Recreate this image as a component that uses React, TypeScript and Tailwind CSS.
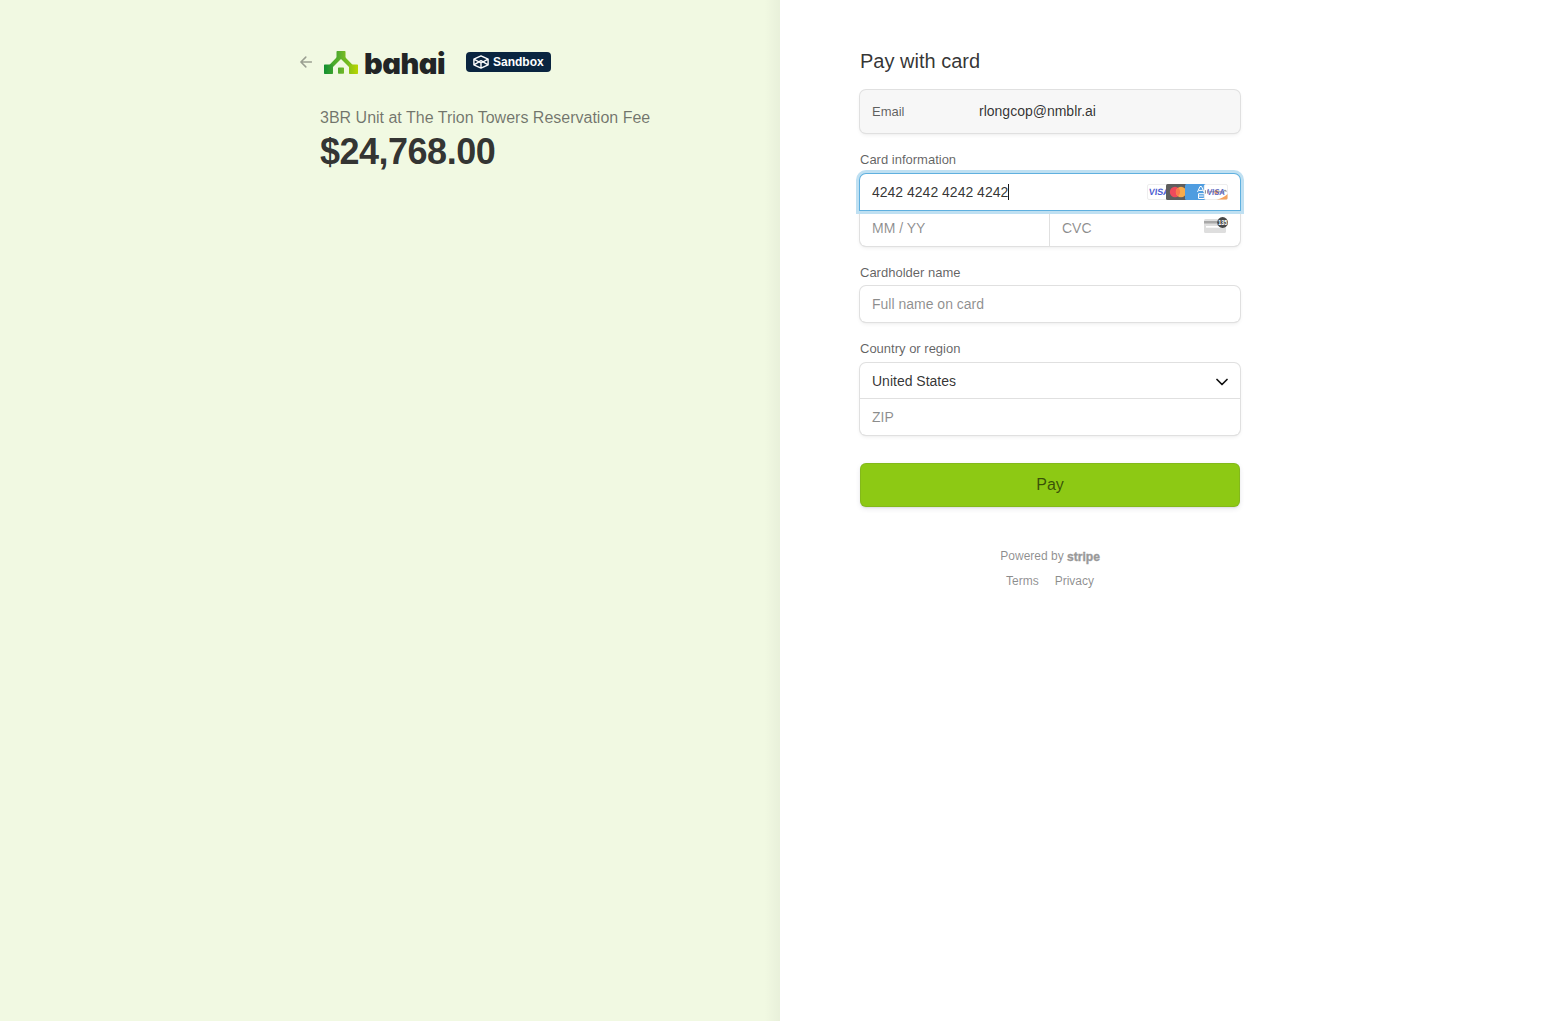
import React from "react";

const fieldShadow =
  "shadow-[0_0_0_1px_#e0e0e0,0_2px_4px_0_rgba(0,0,0,0.07),0_1px_1.5px_0_rgba(0,0,0,0.05)]";

function BackArrow() {
  return (
    <svg width="12" height="12" viewBox="0 0 12 12" fill="none" className="mr-3 shrink-0">
      <path d="M11.500 6H1M5.800 1.100L.9 6l4.900 4.900" stroke="#1a1a1a" strokeOpacity=".4" strokeWidth="1.500" strokeLinecap="round" strokeLinejoin="round" />
    </svg>
  );
}

function HouseMark() {
  return (
    <svg width="34" height="23" viewBox="0 0 34 23" className="shrink-0">
      <defs>
        <linearGradient id="leaf" gradientUnits="userSpaceOnUse" x1="0" y1="0" x2="34" y2="0">
          <stop offset="0" stopColor="#129030" />
          <stop offset=".5" stopColor="#62b22c" />
          <stop offset="1" stopColor="#b9d600" />
        </linearGradient>
        <linearGradient id="shade" gradientUnits="userSpaceOnUse" x1="0" y1="0" x2="34" y2="0">
          <stop offset="0" stopColor="#2f9f33" />
          <stop offset="1" stopColor="#93c81a" />
        </linearGradient>
      </defs>
      <path d="M13 6L5.500 13.800l3.500 2.200 8-8 8 8 3.500-2.200-7.500-7.800z" fill="url(#shade)" />
      <path
        d="M13.200 0h7.600q.7 0 .7.7v7.100h-9V.7q0-.7.7-.7zM.7 13.500H9V22.300q0 .7-.7.7H.7q-.7 0-.7-.7v-8.100q0-.7.7-.7zM25 13.500h8.300q.7 0 .7.7v8.100q0 .7-.7.7h-7.600q-.7 0-.7-.7zM14.700 16.500h4.600q.7 0 .7.700v4.800q0 .7-.7.7h-4.600q-.7 0-.7-.7v-4.800q0-.7.7-.7z"
        fill="url(#leaf)"
      />
    </svg>
  );
}

function SandboxBadge() {
  return (
    <div className="ml-[22px] flex h-5 w-[85px] items-center rounded-[4px] bg-[#0a2540] pl-[7px]">
      <svg width="16" height="14" viewBox="0 0 16 14" fill="none" stroke="#fff" strokeWidth="1.400" strokeLinejoin="round">
        <path d="M8 .9l7.100 3.300v5.600L8 13.100.9 9.800V4.200zM.9 4.200L8 8l7.100-3.800M8 8v5M.9 9.800L8 5.600l7.100 4.200" />
      </svg>
      <span className="ml-[4px] text-[12px] font-bold leading-5 text-white">Sandbox</span>
    </div>
  );
}

function CardBrands() {
  return (
    <svg width="81" height="16" viewBox="0 0 81 16" className="shrink-0" fontFamily="'Liberation Sans', sans-serif">
      <rect x=".5" y=".5" width="23" height="15" rx="1.500" fill="#fff" stroke="#eeeeee" />
      <text x="3" y="11.300" transform="skewX(-7)" fontSize="9.200" fontWeight="700" fill="#4a5bd0" textLength="20.500" lengthAdjust="spacingAndGlyphs">VISA</text>
      <rect x="19" width="24" height="16" rx="1.500" fill="#5e5e5e" />
      <circle cx="28" cy="8" r="5.200" fill="#ee4a5c" />
      <circle cx="34" cy="8" r="5.200" fill="#f8ab4a" />
      <path d="M31 3.800a5.200 5.200 0 0 1 0 8.400 5.200 5.200 0 0 1 0-8.400z" fill="#fa7a4c" />
      <rect x="38" width="24" height="16" rx="1.500" fill="#4f9de0" />
      <path d="M50.500 8l2.500-5.500h1.500L57 8M51.800 6.400h4M57.500 8V2.800h3M57 9.700h-5.500v4.800H57M51.500 12h5" fill="none" stroke="#fff" strokeWidth="1" />
      <rect x="57.300" y=".5" width="23.200" height="15" rx="1.500" fill="#fff" stroke="#eeeeee" />
      <path d="M80.500 10v4a1.500 1.500 0 0 1-1.500 1.500h-9.500c4.500-.8 8-2.600 11-5.500z" fill="#f5a35f" />
      <path d="M58.500 6.200v3.400M60.500 6.200v3.400M62.500 7.800h15M77 6.400h2v1.600" fill="none" stroke="#8a8a8e" strokeWidth=".9" />
      <circle cx="69.300" cy="8" r="2" fill="#f5a35f" />
      <text x="61" y="11" transform="skewX(-7)" fontSize="8.700" fontWeight="700" fill="#4f59b8" fillOpacity=".9" textLength="18" lengthAdjust="spacingAndGlyphs">VISA</text>
    </svg>
  );
}

function CvcCard() {
  return (
    <svg width="24" height="17" viewBox="0 0 24 17" className="relative -top-[3px] overflow-visible">
      <rect y="2" width="22" height="14" rx="1.500" fill="#dedede" />
      <rect y="4" width="22" height="2.500" fill="#a8a8a8" />
      <rect x="2" y="9" width="18" height="1.700" fill="#fff" />
      <circle cx="18.600" cy="5.500" r="5.400" fill="#484848" />
      <text x="14.200" y="8" fontFamily="'Liberation Sans', sans-serif" fontSize="7" fontWeight="700" fill="#fff" textLength="9" lengthAdjust="spacingAndGlyphs">135</text>
    </svg>
  );
}

function Label({ children }: { children: React.ReactNode }) {
  return <div className="text-[13px] leading-4 text-[#1a1a1a]/70">{children}</div>;
}

const placeholder = "pt-px text-[14px] text-[#1a1a1a]/50";

export default function App() {
  return (
    <div className="flex min-h-screen bg-white font-['Liberation_Sans',Arial,sans-serif] text-[#1a1a1a]/90">
      <section className="flex w-1/2 justify-between bg-[#f1f9e2]">
        <div className="pl-[300px] pt-[50px]">
          <div className="flex h-6 items-center">
            <BackArrow />
            <HouseMark />
            <span className="ml-[6px] w-[80px] whitespace-nowrap pt-[3px] font-['Inter',sans-serif] text-[29px] font-black leading-6 tracking-[-0.5px] text-[#222526] [font-feature-settings:'cv11']">bahai</span>
            <SandboxBadge />
          </div>
          <div className="pl-5 pt-[34px]">
            <h1 className="text-[16px] leading-5 text-[#1a1a1a]/60">3BR Unit at The Trion Towers Reservation Fee</h1>
            <p className="mt-[4px] text-[36px] font-bold leading-[40px] tracking-[-0.5px] text-[#1a1a1a]/90">$24,768.00</p>
          </div>
        </div>
        <div className="w-4 bg-linear-to-r from-transparent to-black/[0.035]" />
      </section>

      <main className="w-1/2 pl-20 pt-[49px]">
        <div className="w-[380px]">
          <h2 className="text-[20px] leading-6">Pay with card</h2>

          <div className={`mt-[17px] flex h-[43px] items-center rounded-[6px] bg-[#f7f7f7] px-3 ${fieldShadow}`}>
            <span className="w-[107px] text-[13px] text-[#1a1a1a]/70">Email</span>
            <span className="text-[14px]">rlongcop@nmblr.ai</span>
          </div>

          <div className="mt-[19px]"><Label>Card information</Label></div>
          <div className={`mt-[6px] rounded-[6px] ${fieldShadow}`}>
            <div className="relative z-10 flex h-9 items-center justify-between rounded-t-[6px] bg-white px-3 shadow-[0_0_0_1px_#5fb0df,0_0_0_4px_#bfe0f2]">
              <div className="flex items-center text-[14px]">
                <span>4242 4242 4242 4242</span>
                <span className="h-4 w-px bg-[#1a1a1a]" />
              </div>
              <CardBrands />
            </div>
            <div className="flex h-9">
              <div className={`flex w-[190px] items-center border-r border-[#e0e0e0] pl-3 ${placeholder}`}>MM / YY</div>
              <div className={`flex flex-1 items-center justify-between px-3 ${placeholder}`}>
                <span>CVC</span>
                <CvcCard />
              </div>
            </div>
          </div>

          <div className="mt-[19px]"><Label>Cardholder name</Label></div>
          <div className={`mt-[5px] flex h-9 items-center rounded-[6px] px-3 ${fieldShadow} ${placeholder}`}>Full name on card</div>

          <div className="mt-[19px]"><Label>Country or region</Label></div>
          <div className={`mt-[6px] rounded-[6px] ${fieldShadow}`}>
            <div className="flex h-9 items-center justify-between border-b border-[#e0e0e0] px-3 pt-[2px] text-[14px]">
              <span>United States</span>
              <svg width="12" height="8" viewBox="0 0 12 8" fill="none">
                <path d="M1 1.500l5 5 5-5" stroke="#111" strokeWidth="1.700" strokeLinecap="round" strokeLinejoin="round" />
              </svg>
            </div>
            <div className={`flex h-9 items-center px-3 ${placeholder}`}>ZIP</div>
          </div>

          <button className="mt-7 block h-11 w-full rounded-[6px] bg-[#8dc914] text-[16px] text-black/60 shadow-[inset_0_0_0_1px_rgba(50,50,93,0.1),0_2px_5px_0_rgba(50,50,93,0.1),0_1px_1.5px_0_rgba(0,0,0,0.07)]">
            Pay
          </button>

          <footer className="mt-[41px] text-[12px] leading-4 text-[#1a1a1a]/50">
            <div className="flex justify-center">
              <span>Powered by</span>
              <svg width="33" height="18" viewBox="0 0 33 18" className="-mb-[2px] ml-[3px] overflow-visible">
                <text x="0" y="12.500" fontFamily="'Liberation Sans', sans-serif" fontSize="13.500" fontWeight="700" fill="#999999" stroke="#999999" strokeWidth=".4" textLength="33" lengthAdjust="spacingAndGlyphs">stripe</text>
              </svg>
            </div>
            <div className="mt-[9px] flex justify-center gap-4">
              <span>Terms</span>
              <span>Privacy</span>
            </div>
          </footer>
        </div>
      </main>
    </div>
  );
}
